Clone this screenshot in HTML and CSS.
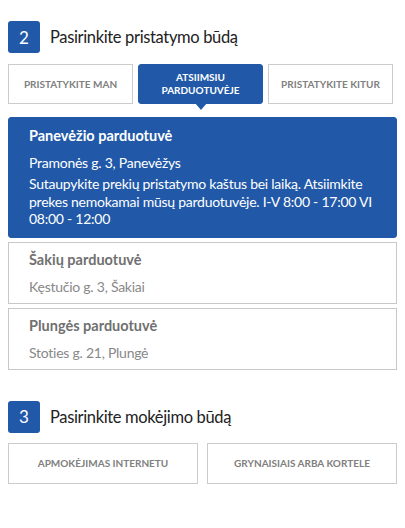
FILE: index.html
```html
<!DOCTYPE html>
<html lang="lt">
<head>
<meta charset="utf-8">
<link rel="stylesheet" href="styles.css">
</head>
<body>
<section class="step">
  <div class="step-head">
    <span class="badge">2</span>
    <h2 class="step-title">Pasirinkite pristatymo būdą</h2>
  </div>
  <div class="tabs">
    <button class="tab">PRISTATYKITE MAN</button>
    <button class="tab active">ATSIIMSIU<br>PARDUOTUVĖJE</button>
    <button class="tab">PRISTATYKITE KITUR</button>
  </div>
  <div class="stores">
    <div class="store selected">
      <div class="store-name">Panevėžio parduotuvė</div>
      <div class="store-addr">Pramonės g. 3, Panevėžys</div>
      <div class="store-desc">Sutaupykite prekių pristatymo kaštus bei laiką. Atsiimkite prekes nemokamai mūsų parduotuvėje. I-V 8:00 - 17:00 VI 08:00 - 12:00</div>
    </div>
    <div class="store">
      <div class="store-name">Šakių parduotuvė</div>
      <div class="store-addr">Kęstučio g. 3, Šakiai</div>
    </div>
    <div class="store">
      <div class="store-name">Plungės parduotuvė</div>
      <div class="store-addr">Stoties g. 21, Plungė</div>
    </div>
  </div>
</section>
<section class="step step-pay">
  <div class="step-head">
    <span class="badge">3</span>
    <h2 class="step-title">Pasirinkite mokėjimo būdą</h2>
  </div>
  <div class="pay">
    <button class="pay-btn">APMOKĖJIMAS INTERNETU</button>
    <button class="pay-btn">GRYNAISIAIS ARBA KORTELE</button>
  </div>
</section>
</body>
</html>
```
FILE: styles.css
```css
* { box-sizing: border-box; }
body {
  margin: 8px;
  background: #fff;
  font-family: Lato, "Liberation Sans", sans-serif;
  color: #777;
}
.step { margin-top: 13px; }
.step-pay { margin-top: 31px; }
.step-head {
  display: flex;
  align-items: center;
  gap: 10px;
  height: 32px;
}
.badge {
  width: 32px;
  height: 32px;
  border-radius: 3px;
  background: #2159a8;
  color: #fff;
  display: flex;
  align-items: center;
  justify-content: center;
  font-size: 17px;
}
.step-title {
  margin: 0;
  font-size: 16.5px;
  font-weight: 400;
  letter-spacing: -0.35px;
  color: #222;
}
.tabs {
  display: flex;
  gap: 5px;
  margin-top: 11px;
}
.tab {
  width: 125px;
  height: 40px;
  border: 1px solid #ccc;
  background: #fff;
  color: #808080;
  font-family: inherit;
  font-weight: 700;
  font-size: 10px;
  line-height: 13px;
  padding: 0;
  position: relative;
}
.tab.active {
  background: #2159a8;
  border-color: #2159a8;
  color: #fff;
  border-radius: 3px;
}
.tab.active::after {
  content: "";
  position: absolute;
  left: 50%;
  bottom: -7px;
  margin-left: -6px;
  border-left: 6px solid transparent;
  border-right: 6px solid transparent;
  border-top: 7px solid #2159a8;
}
.stores {
  margin-top: 13px;
  display: flex;
  flex-direction: column;
  gap: 4px;
}
.store {
  border: 1px solid #c8c8c8;
  padding: 8px 20px 7px;
  font-size: 14px;
  line-height: 18px;
  letter-spacing: -0.25px;
}
.store-name { font-weight: 700; color: #707070; font-size: 14.5px; letter-spacing: 0; }
.store-addr { margin-top: 9px; color: #888; }
.store.selected {
  background: #2159a8;
  border-color: #2159a8;
  border-radius: 3px;
  padding: 9px 20px 9px;
  color: #fff;
}
.store.selected .store-name,
.store.selected .store-addr { color: #fff; }
.store-desc {
  margin-top: 3px;
  line-height: 17.5px;
}
.pay {
  display: flex;
  gap: 9px;
  margin-top: 10px;
}
.pay-btn {
  flex: 1;
  height: 41px;
  border: 1px solid #ccc;
  background: #fff;
  color: #808080;
  font-family: inherit;
  font-weight: 700;
  font-size: 10px;
  padding: 0;
}
```
